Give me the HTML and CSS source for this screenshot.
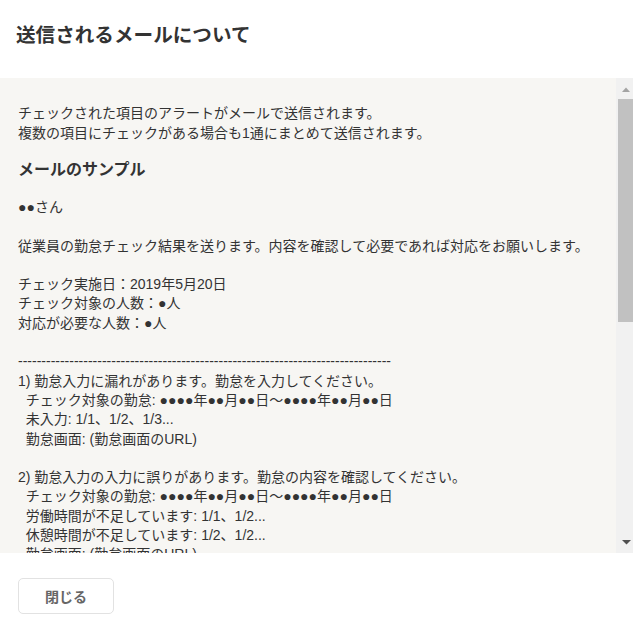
FILE: index.html
```html
<!DOCTYPE html>
<html lang="ja">
<head>
<meta charset="utf-8">
<title>送信されるメールについて</title>
<link rel="stylesheet" href="styles.css">
</head>
<body>
<div class="dialog">
  <header class="dialog-header">
    <h1 class="dialog-title">送信されるメールについて</h1>
  </header>
  <div class="dialog-middle">
    <main class="dialog-body">
      <p class="intro">チェックされた項目のアラートがメールで送信されます。<br>複数の項目にチェックがある場合も1通にまとめて送信されます。</p>
      <h2 class="sample-title">メールのサンプル</h2>
<pre class="sample">●●さん

従業員の勤怠チェック結果を送ります。内容を確認して必要であれば対応をお願いします。

チェック実施日：2019年5月20日
チェック対象の人数：●人
対応が必要な人数：●人

--------------------------------------------------------------------------------
1) 勤怠入力に漏れがあります。勤怠を入力してください。
  チェック対象の勤怠: ●●●●年●●月●●日～●●●●年●●月●●日
  未入力: 1/1、1/2、1/3...
  勤怠画面: (勤怠画面のURL)

2) 勤怠入力の入力に誤りがあります。勤怠の内容を確認してください。
  チェック対象の勤怠: ●●●●年●●月●●日～●●●●年●●月●●日
  労働時間が不足しています: 1/1、1/2...
  休憩時間が不足しています: 1/2、1/2...
  勤怠画面: (勤怠画面のURL)

3) 打刻と勤怠の時間に差異があります。勤怠の内容を確認してください。
  チェック対象の勤怠: ●●●●年●●月●●日～●●●●年●●月●●日
  差異がある日: 1/1、1/2...
  勤怠画面: (勤怠画面のURL)
</pre>
    </main>
    <div class="scrollbar" aria-hidden="true">
      <div class="sb-button">
        <svg width="17" height="17" viewBox="0 0 17 17"><polygon points="6,14 14,14 10,9.5" fill="#a3a3a3"/></svg>
      </div>
      <div class="sb-track">
        <div class="sb-thumb"></div>
      </div>
      <div class="sb-button">
        <svg width="17" height="17" viewBox="0 0 17 17"><polygon points="6,4 15,4 10.5,8.5" fill="#505050"/></svg>
      </div>
    </div>
  </div>
  <footer class="dialog-footer">
    <button class="btn-close" type="button">閉じる</button>
  </footer>
</div>
</body>
</html>
```

FILE: styles.css
```css
html, body {
  margin: 0;
  padding: 0;
  background: #ffffff;
}

body {
  font-family: "Liberation Sans", "Noto Sans CJK JP", sans-serif;
  color: #333333;
}

.dialog {
  display: flex;
  flex-direction: column;
  height: 631px;
  width: 633px;
}

.dialog-header {
  height: 78px;
  box-sizing: border-box;
  padding: 22px 16px 0;
  flex: none;
}

.dialog-title {
  margin: 0;
  font-size: 19.6px;
  line-height: 26px;
  font-weight: bold;
  color: #333333;
}

.dialog-middle {
  flex: none;
  height: 475px;
  display: flex;
  background: #f7f6f3;
}

.dialog-body {
  flex: 1;
  min-width: 0;
  box-sizing: border-box;
  overflow: hidden;
  padding: 25px 18px 20px;
}

.intro {
  margin: 0;
  font-size: 14px;
  line-height: 20px;
}

.sample-title {
  margin: 15px 0 0;
  font-size: 16px;
  line-height: 24px;
  font-weight: bold;
}

.sample {
  margin: 16px 0 0;
  font-family: "Liberation Sans", "Noto Sans CJK JP", sans-serif;
  font-size: 14px;
  line-height: 19.3px;
  white-space: pre-wrap;
  color: #333333;
}

.scrollbar {
  flex: none;
  width: 17px;
  display: flex;
  flex-direction: column;
  background: #f1f1f1;
}

.sb-button {
  flex: none;
  height: 17px;
}

.sb-button svg {
  display: block;
}

.sb-track {
  flex: 1;
  padding-top: 4px;
}

.sb-thumb {
  margin-left: 2px;
  height: 223px;
  background: #c1c1c1;
}

.dialog-footer {
  flex: none;
  padding: 25px 18px 0;
}

.btn-close {
  width: 96px;
  height: 36px;
  box-sizing: border-box;
  border: 1px solid #e2e2e2;
  border-radius: 5px;
  background: #ffffff;
  font-family: "Liberation Sans", "Noto Sans CJK JP", sans-serif;
  font-size: 14px;
  font-weight: bold;
  color: #666666;
  padding: 0;
}
```
